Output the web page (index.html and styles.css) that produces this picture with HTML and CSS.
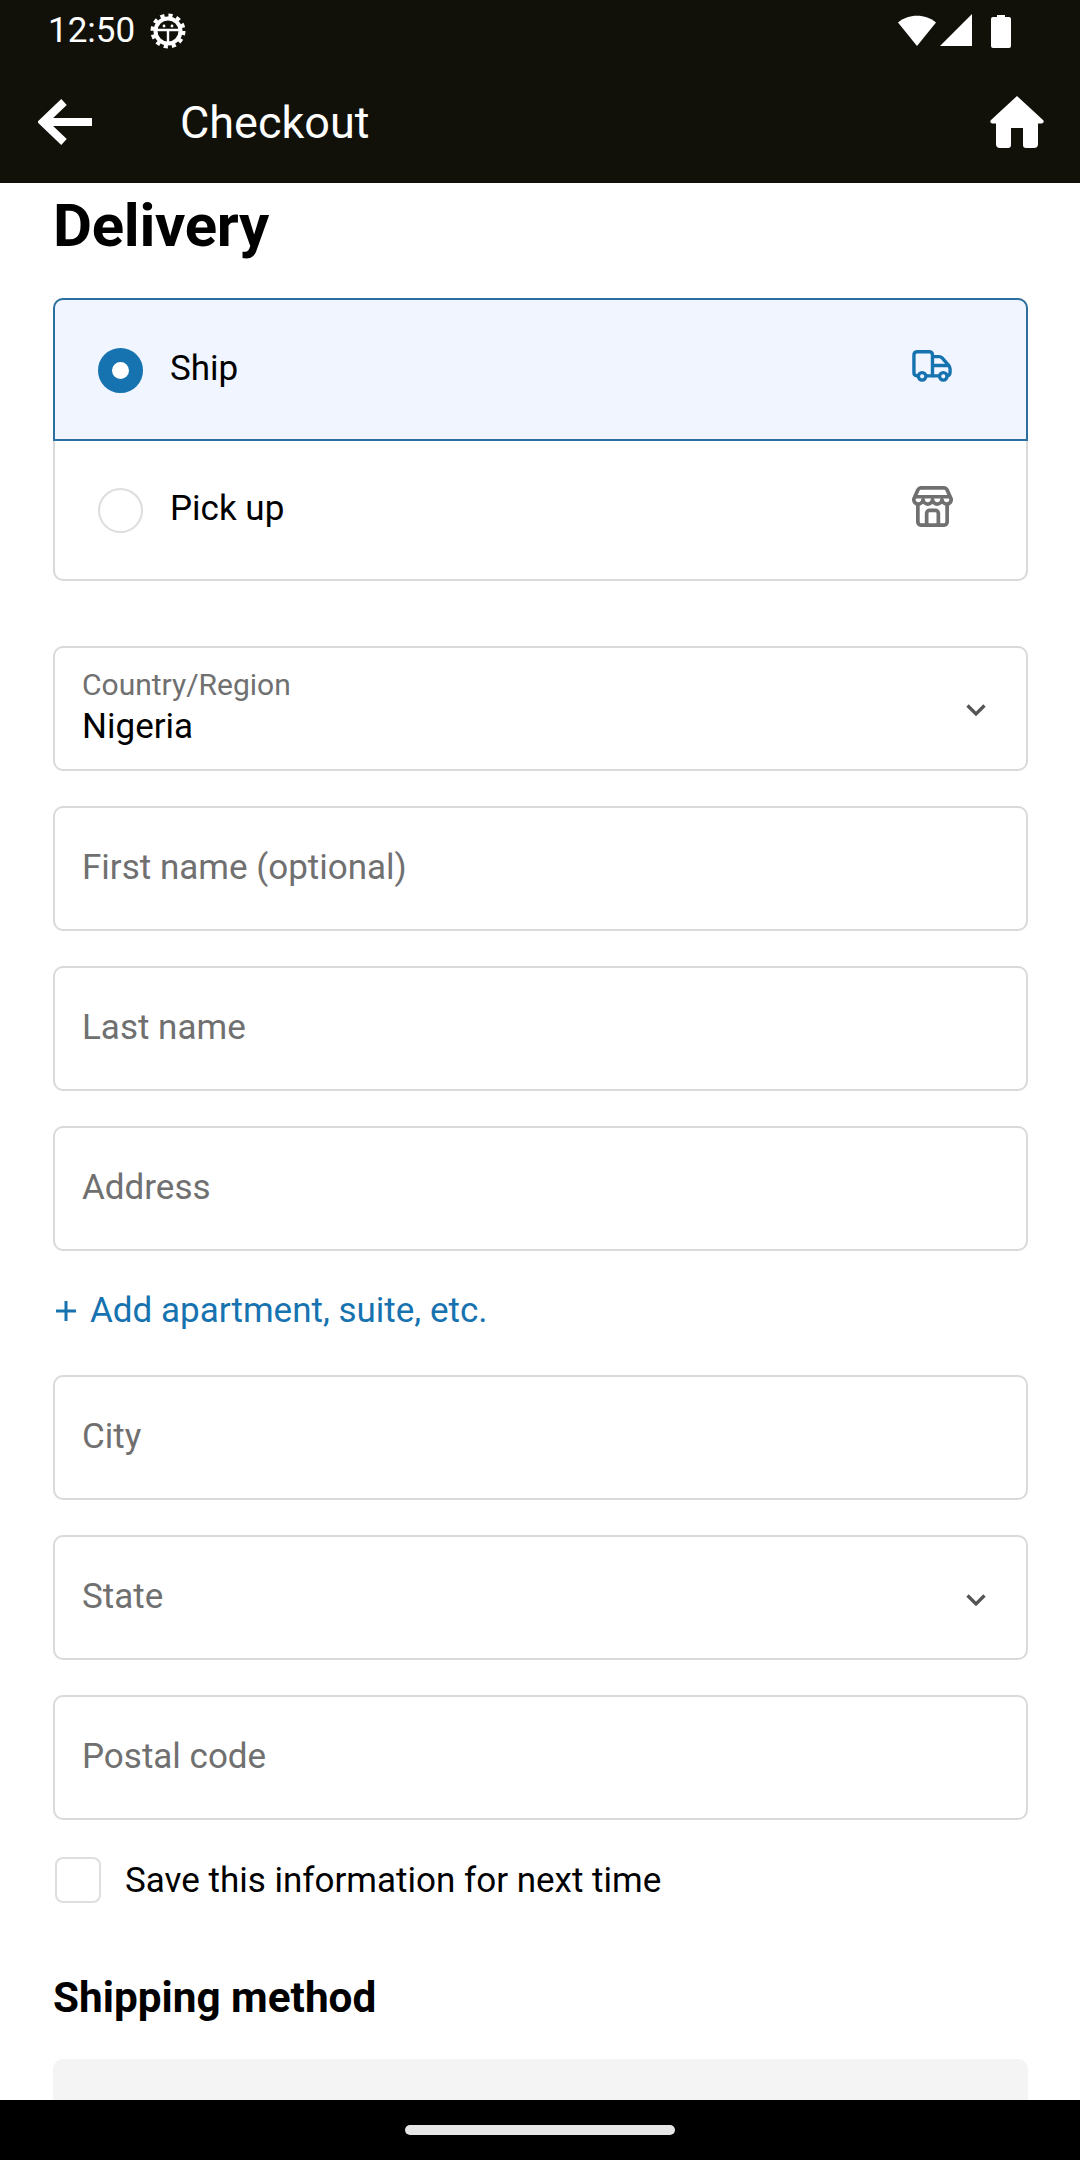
FILE: index.html
```html
<!DOCTYPE html>
<html lang="en">
<head>
<meta charset="utf-8">
<title>Checkout</title>
<link rel="stylesheet" href="styles.css">
</head>
<body>
<div class="screen">
  <header class="top">
    <div class="status">
      <div class="status-left">
        <span class="time">12:50</span>
        <svg class="gear" viewBox="0 0 36 36" width="36" height="36"><circle cx="18" cy="18" r="12.5" fill="none" stroke="#fff" stroke-width="4"/><circle cx="18" cy="18" r="15" fill="none" stroke="#fff" stroke-width="5" stroke-dasharray="4 3.85"/><path d="M7 17h22M18 17v13" stroke="#fff" stroke-width="2.4" fill="none"/><circle cx="14" cy="13" r="1.4" fill="#fff"/><circle cx="22" cy="13" r="1.4" fill="#fff"/></svg>
      </div>
      <div class="status-right">
        <svg viewBox="0 0 40 34" width="40" height="34"><path d="M1 8.500C11-.5 29-.5 39 8.500L20 32z" fill="#fff"/></svg>
        <svg viewBox="0 0 33 33" width="33" height="33"><path d="M32 0v32H0z" fill="#fff"/></svg>
        <svg viewBox="0 0 20 34" width="20" height="34"><path d="M6 3V1h8v2h4a2 2 0 0 1 2 2v27a2 2 0 0 1-2 2H2a2 2 0 0 1-2-2V5a2 2 0 0 1 2-2z" fill="#fff"/></svg>
      </div>
    </div>
    <div class="appbar">
      <div class="appbar-left">
        <svg class="back" viewBox="0 0 54 46" width="54" height="46"><path d="M54 23H6M26 3 5 23l21 20" fill="none" stroke="#fff" stroke-width="8"/></svg>
        <span class="title">Checkout</span>
      </div>
      <svg class="home" viewBox="0 0 54 52" width="54" height="52"><path d="M27 0 53 24c1.500 1.600.5 3.500-1.500 3.500H48V48a4 4 0 0 1-4 4H36a3 3 0 0 1-3-3V32H21v17a3 3 0 0 1-3 3H10a4 4 0 0 1-4-4V27.500H2.500C.5 27.500-.5 25.600 1 24z" fill="#fff"/></svg>
    </div>
  </header>

  <main class="content">
    <h1 class="heading">Delivery</h1>

    <div class="options">
      <div class="option option-active">
        <span class="radio radio-on"></span>
        <span class="option-label">Ship</span>
        <svg class="option-icon" viewBox="0 0 42 34" width="40" height="32"><g fill="none" stroke="#1773b0" stroke-width="3.600" stroke-linejoin="round"><path d="M6.500 27.500H5A3.500 3.500 0 0 1 1.800 24V5A3.500 3.500 0 0 1 5 1.800h13A3.500 3.500 0 0 1 21.500 5v22.500h-7"/><path d="M21.500 7h7c1.500 0 2.500.6 3.500 1.700l6.500 7.300c1 1.200 1.700 2.400 1.700 4V24c0 2-1.500 3.500-3.500 3.500h-1M21.500 16.500h18.500M29 27.500h-7.500"/><circle cx="10.500" cy="28" r="4"/><circle cx="33" cy="28" r="4"/></g></svg>
      </div>
      <div class="option">
        <span class="radio"></span>
        <span class="option-label">Pick up</span>
        <svg class="option-icon" viewBox="0 0 42 42" width="41" height="41"><g fill="none" stroke="#707070" stroke-width="3.800" stroke-linejoin="round"><path d="M9 2h24c1.500 0 2.300.8 3 2l4 9c.6 3-1.500 5.500-4.500 5.500-2.500 0-4.500-2-4.800-4.500-.3 2.500-2.400 4.500-4.700 4.500-2.500 0-4.700-2-5-4.500-.3 2.500-2.500 4.500-5 4.500-2.300 0-4.400-2-4.700-4.500-.3 2.500-2.300 4.500-4.800 4.500C3.500 18.500 1.400 16 2 13l4-9c.7-1.200 1.500-2 3-2z"/><path d="M2.500 11h37"/><path d="M6 18v19a3 3 0 0 0 3 3h24a3 3 0 0 0 3-3V18"/><path d="M15 40V28a3 3 0 0 1 3-3h6a3 3 0 0 1 3 3v12"/></g></svg>
      </div>
    </div>

    <div class="fields">
      <div class="field field-filled">
        <div class="field-text">
          <span class="field-small">Country/Region</span>
          <span class="field-value">Nigeria</span>
        </div>
        <svg class="chevron chevron-filled" viewBox="0 0 22 14" width="22" height="14"><path d="M2.500 2.500 11 11l8.500-8.500" fill="none" stroke="#545454" stroke-width="3.200"/></svg>
      </div>
      <div class="field"><span class="placeholder">First name (optional)</span></div>
      <div class="field"><span class="placeholder">Last name</span></div>
      <div class="field"><span class="placeholder">Address</span></div>
      <div class="add-link">
        <svg viewBox="0 0 22 22" width="22" height="22"><path d="M11 1v20M1 11h20" stroke="#1773b0" stroke-width="3" fill="none"/></svg>
        <span>Add apartment, suite, etc.</span>
      </div>
      <div class="field"><span class="placeholder">City</span></div>
      <div class="field">
        <span class="placeholder">State</span>
        <svg class="chevron" viewBox="0 0 22 14" width="22" height="14"><path d="M2.500 2.500 11 11l8.500-8.500" fill="none" stroke="#545454" stroke-width="3.200"/></svg>
      </div>
      <div class="field"><span class="placeholder">Postal code</span></div>
      <label class="save-row">
        <span class="checkbox"></span>
        <span class="save-label">Save this information for next time</span>
      </label>
    </div>

    <h2 class="subheading">Shipping method</h2>
    <div class="method-box"></div>
  </main>

  <footer class="navbar"><span class="pill"></span></footer>
</div>
</body>
</html>
```
FILE: styles.css
```css
* { box-sizing: border-box; }
html, body { margin: 0; padding: 0; }
body { font-family: Roboto, "Noto Sans", sans-serif; background: #fff; color: #000; }

.screen { width: 1080px; height: 2160px; display: flex; flex-direction: column; overflow: hidden; }

.top { height: 183px; flex: none; background: #11110a; color: #fff; display: flex; flex-direction: column; }
.status { height: 61px; display: flex; align-items: center; justify-content: space-between; padding: 0 69px 0 48px; }
.status-left { display: flex; align-items: center; gap: 15px; }
.time { font-size: 35px; line-height: 61px; }
.status-right { display: flex; align-items: center; gap: 3px; }
.status-right svg { display: block; }
.status-right svg:last-child { margin-left: 15px; }
.appbar { flex: 1; display: flex; align-items: center; justify-content: space-between; padding: 0 36px 0 38px; }
.appbar-left { display: flex; align-items: center; gap: 88px; }
.title { font-size: 45px; line-height: 60px; margin-top: 2px; }
.back, .home { display: block; }

.content { flex: 1; min-height: 0; overflow: hidden; padding: 0 52px 0 53px; }
.heading { margin: 13px 0 0; font-size: 60px; line-height: 60px; font-weight: 700; letter-spacing: -0.3px; }

.options { margin-top: 42px; border: 2px solid #d9d9d9; border-radius: 10px; background: #fff; }
.option { height: 138px; display: flex; align-items: center; padding: 0 73px 0 43px; }
.option-active { height: 143px; margin: -2px -2px 0; background: #f0f5ff; border: 2px solid #2a6f9f; border-radius: 10px 10px 0 0; padding-left: 43px; padding-right: 74px; }
.radio { width: 45px; height: 45px; border-radius: 50%; border: 2px solid #dedede; background: #fff; flex: none; }
.radio-on { border: 14.500px solid #1773b0; margin-top: 1px; }
.option-label { flex: 1; margin-left: 27px; margin-top: -2px; font-size: 35px; line-height: 44px; }
.option-icon { display: block; flex: none; margin-top: -8px; }

.fields { margin-top: 65px; display: flex; flex-direction: column; gap: 35px; }
.field { height: 125px; border: 2px solid #d9d9d9; border-radius: 10px; display: flex; align-items: center; justify-content: space-between; padding: 0 39px 1px 27px; }
.field-filled { padding-bottom: 0; }
.field-text { display: flex; flex-direction: column; }
.field-small { font-size: 30px; line-height: 36px; color: #707070; margin-top: -2px; }
.field-value { font-size: 35px; line-height: 44px; color: #000; margin-top: 2px; }
.placeholder { font-size: 35px; line-height: 44px; color: #707070; }
.chevron { display: block; margin-top: 6px; }
.chevron-filled { margin-top: 3px; }

.add-link { display: flex; align-items: center; gap: 13px; margin: 3px 0 7px; padding-left: 2px; height: 44px; color: #1773b0; font-size: 35px; line-height: 44px; }
.add-link svg { display: block; flex: none; }

.save-row { display: flex; align-items: center; gap: 24px; margin-top: 1px; padding-left: 2px; height: 47px; }
.checkbox { width: 46px; height: 46px; border: 2px solid #dedede; border-radius: 8px; flex: none; }
.save-label { font-size: 35px; line-height: 44px; margin-top: 3px; }

.subheading { margin: 70px 0 0; font-size: 42.3px; line-height: 50px; font-weight: 700; }
.method-box { margin-top: 36px; height: 120px; background: #f4f4f4; border-radius: 10px; }

.navbar { height: 60px; flex: none; background: #000; display: flex; justify-content: center; padding-top: 25px; }
.pill { display: block; width: 270px; height: 10px; background: #e6e6e6; border-radius: 5px; }
```
